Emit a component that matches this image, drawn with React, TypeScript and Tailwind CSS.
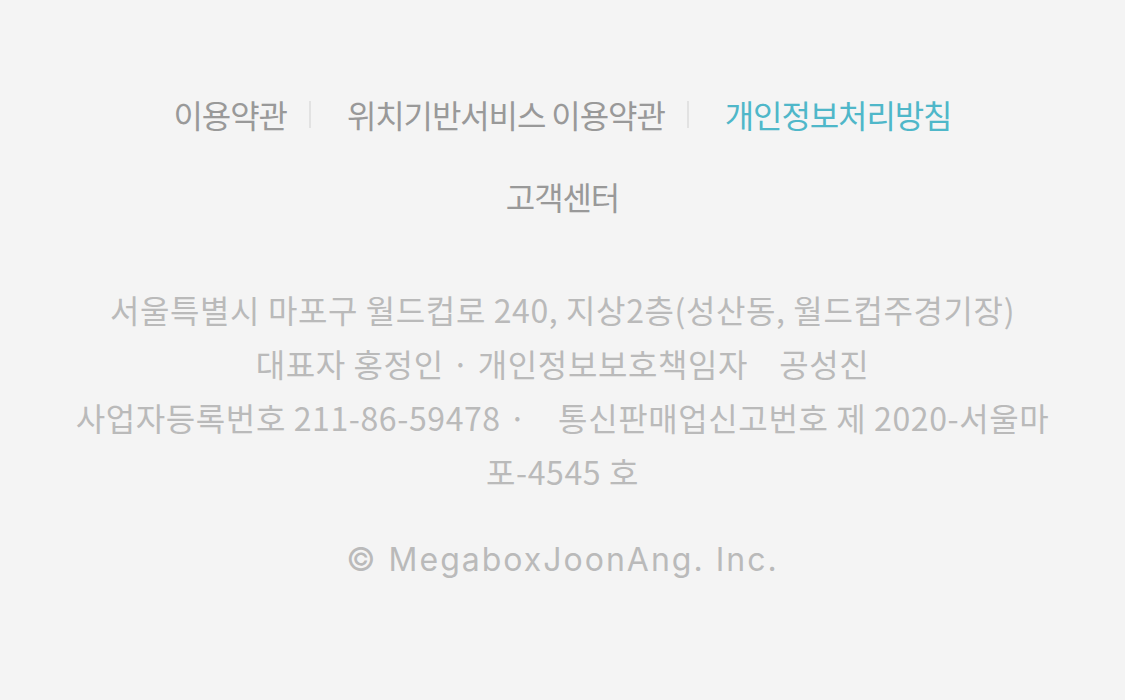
export default function App() {
  const links = ["이용약관", "위치기반서비스 이용약관"];

  return (
    <div className="flex min-h-[700px] w-full flex-col items-center bg-[#f4f4f4] pt-[91px] font-['Noto_Sans_CJK_KR','Noto_Sans',sans-serif]">
      <nav className="flex items-center text-[32px] leading-[46px] tracking-[-1.1px]">
        {links.map((label) => (
          <div key={label} className="flex items-center">
            <a className="text-[#999999]">{label}</a>
            <span className="ml-[22px] mr-[36px] h-[27px] w-[2px] bg-[#e2e2e2]" />
          </div>
        ))}
        <a className="text-[#4fb7c9]">개인정보처리방침</a>
      </nav>

      <a className="mt-[36px] text-[32px] leading-[46px] tracking-[-1.1px] text-[#999999]">고객센터</a>

      <address className="mt-[63px] max-w-[975px] text-center text-[32px] not-italic leading-[54px] tracking-[0.6px] text-[#bababa]">
        <p>서울특별시 마포구 월드컵로 240, 지상2층(성산동, 월드컵주경기장)</p>
        <p>대표자 홍정인 · 개인정보보호책임자&nbsp;&nbsp;&nbsp; 공성진</p>
        <p>사업자등록번호 211-86-59478 ·&nbsp;&nbsp;&nbsp; 통신판매업신고번호 제 2020-서울마포-4545 호</p>
      </address>

      <p className="mt-[40px] font-['Inter',sans-serif] text-[32px] leading-[44px] tracking-[2px] text-[#bababa]">
        © MegaboxJoonAng. Inc.
      </p>
    </div>
  );
}
